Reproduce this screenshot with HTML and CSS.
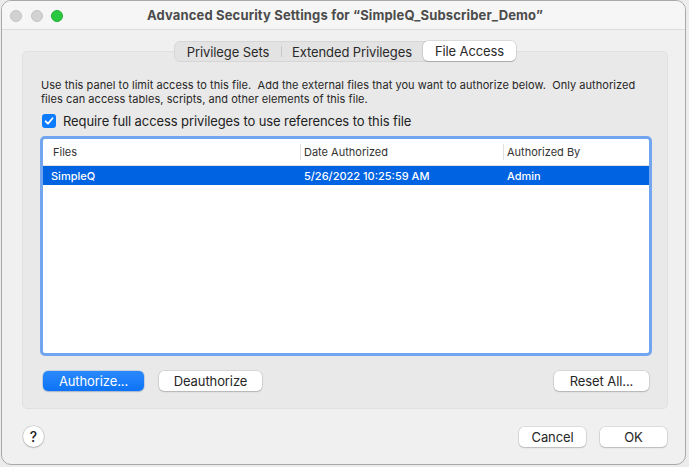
FILE: index.html
```html
<!DOCTYPE html>
<html>
<head>
<meta charset="utf-8">
<link rel="stylesheet" href="styles.css">
</head>
<body>
<div class="window">
  <div class="titlebar">
    <div class="lights">
      <span class="light off"></span>
      <span class="light off"></span>
      <span class="light green"></span>
    </div>
    <div class="title">Advanced Security Settings for “SimpleQ_Subscriber_Demo”</div>
    <div></div>
  </div>
  <div class="content">
    <div class="tabs">
      <span class="tab">Privilege Sets</span>
      <span class="tab sep">Extended Privileges</span>
      <span class="tab selected">File Access</span>
    </div>
    <div class="group">
      <p class="desc">Use this panel to limit access to this file.&nbsp; Add the external files that you want to authorize below.&nbsp; Only authorized<br>files can access tables, scripts, and other elements of this file.</p>
      <div class="check">
        <span class="box"><svg width="10" height="10" viewBox="0 0 10 10"><path d="M1.6 5.3 L4 7.7 L8.5 2.2" fill="none" stroke="#fff" stroke-width="1.8" stroke-linecap="round" stroke-linejoin="round"/></svg></span>
        <span class="check-label">Require full access privileges to use references to this file</span>
      </div>
      <div class="table">
        <div class="thead">
          <div class="th c1">Files</div>
          <div class="th c2">Date Authorized</div>
          <div class="th c3">Authorized By</div>
        </div>
        <div class="tr selected">
          <div class="td c1">SimpleQ</div>
          <div class="td c2">5/26/2022 10:25:59 AM</div>
          <div class="td c3">Admin</div>
        </div>
      </div>
      <div class="btnrow">
        <button class="btn primary w-auth">Authorize...</button>
        <button class="btn w-deauth">Deauthorize</button>
        <span class="spacer"></span>
        <button class="btn w-reset">Reset All...</button>
      </div>
    </div>
    <div class="footer">
      <button class="help">?</button>
      <span class="spacer"></span>
      <button class="btn w-cancel">Cancel</button>
      <button class="btn w-ok">OK</button>
    </div>
  </div>
</div>
</body>
</html>
```
FILE: styles.css
```css
* { box-sizing: border-box; }
html, body { margin: 0; padding: 0; }
body {
  background: #ececec;
  font-family: Inter, "Liberation Sans", sans-serif;
  color: #262626;
  width: 689px;
  height: 467px;
  overflow: hidden;
}
.window {
  margin-left: 1px;
  width: 685px;
  height: 465px;
  border: 1px solid #a9a9a9;
  border-radius: 10px;
  background: #f0f0f0;
  overflow: hidden;
  display: flex;
  flex-direction: column;
}
.titlebar {
  height: 29px;
  flex: none;
  background: #f6f6f6;
  border-bottom: 1px solid #dcdcdc;
  display: grid;
  grid-template-columns: 1fr auto 1fr;
  align-items: center;
}
.lights {
  display: flex;
  gap: 8.5px;
  padding-left: 8px;
  padding-top: 1px;
}
.light {
  width: 12px;
  height: 12px;
  border-radius: 50%;
}
.light.off { background: #d2d2d2; border: 0.5px solid #c3c3c3; }
.light.green { background: #2ac741; border: 0.5px solid #22ad37; }
.title {
  font-size: 13px;
  font-weight: 700;
  color: #4c4c4c;
  white-space: nowrap;
  letter-spacing: 0.15px;
  padding-left: 3px;
}
.content {
  flex: 1;
  padding: 11px 17px 0 20px;
  display: flex;
  flex-direction: column;
}
.tabs {
  align-self: center;
  display: flex;
  height: 21px;
  margin-bottom: -11px;
  position: relative;
  z-index: 1;
  background: #e3e3e3;
  border: 1px solid #d6d6d6;
  border-radius: 6px;
  font-size: 13px;
  letter-spacing: -0.1px;
}
.tab {
  display: flex;
  align-items: center;
  justify-content: center;
  padding: 0;
  height: 19px;
  color: #2a2a2a;
  position: relative;
  white-space: nowrap;
}
.tab.sep::before {
  content: "";
  position: absolute;
  left: 0;
  top: 4px;
  height: 11px;
  width: 1px;
  background: #c8c8c8;
}
.tab:first-child { width: 106px; }
.tab.sep { width: 142px; }
.tab.selected {
  width: 93px;
  background: #fff;
  border-radius: 5px;
  height: 20px;
  margin-top: -1px;
  margin-right: -1px;
  box-shadow: 0 0 0 0.5px rgba(0,0,0,0.18), 0 1px 1px rgba(0,0,0,0.12);
}
.group {
  height: 358px;
  flex: none;
  background: #e9e9e9;
  border: 1px solid #e0e0e0;
  border-radius: 5px;
  padding: 26px 15px 0 17px;
  display: flex;
  flex-direction: column;
}
.desc {
  margin: 0;
  padding-left: 1px;
  font-size: 11px;
  line-height: 14px;
  letter-spacing: 0.05px;
  color: #262626;
  white-space: nowrap;
}
.check {
  margin-top: 6px;
  height: 18px;
  margin-left: 2px;
  display: flex;
  align-items: center;
  gap: 7px;
}
.box {
  width: 14px;
  height: 14px;
  border-radius: 3px;
  background: #0b7bff;
  display: flex;
  align-items: center;
  justify-content: center;
}
.check-label {
  font-size: 13px;
  color: #222;
  letter-spacing: -0.1px;
}
.table {
  margin-top: 6px;
  height: 220px;
  flex: none;
  border: 3px solid #72a5ef;
  border-radius: 5px;
  background: #fff;
}
.thead, .tr {
  display: grid;
  grid-template-columns: 257px 203px 1fr;
}
.thead {
  height: 27px;
  border-bottom: 1px solid #e2e2e2;
  align-items: center;
  font-size: 11px;
  color: #333;
}
.th.c1 { padding-left: 10px; }
.th.c2, .th.c3 {
  padding-left: 3px;
  border-left: 1px solid #e0e0e0;
  line-height: 16px;
}
.tr {
  height: 19px;
  align-items: center;
  font-size: 11px;
  font-weight: 500;
}
.tr.selected { background: #0063e1; color: #fff; }
.td.c1 { padding-left: 8px; }
.td.c2, .td.c3 { padding-left: 4px; }
.btnrow {
  margin-top: 15px;
  display: flex;
  align-items: center;
  padding: 0 3px;
  gap: 15px;
}
.spacer { flex: 1; }
.btn {
  height: 20px;
  border: none;
  border-radius: 5px;
  background: #fff;
  box-shadow: 0 0 0 0.5px rgba(0,0,0,0.16), 0 1px 1.5px rgba(0,0,0,0.16);
  font-family: inherit;
  font-size: 13px;
  letter-spacing: -0.1px;
  color: #262626;
  padding: 0;
}
.btn.primary {
  background: linear-gradient(#2b89fc, #0c73f6);
  color: #fff;
  box-shadow: 0 0 0 0.5px rgba(0,80,200,0.3), 0 1px 1.5px rgba(0,0,0,0.14);
}
.w-auth { width: 101px; }
.w-deauth { width: 103px; }
.w-reset { width: 95px; }
.w-cancel { width: 67px; }
.w-ok { width: 67px; }
.footer {
  margin-top: 17px;
  display: flex;
  align-items: center;
  gap: 14px;
  padding-left: 1px;
  padding-right: 1px;
}
.help {
  width: 21px;
  height: 21px;
  border-radius: 50%;
  border: none;
  background: #fff;
  box-shadow: 0 0 0 0.5px rgba(0,0,0,0.18), 0 1px 1.5px rgba(0,0,0,0.18);
  font-family: inherit;
  font-size: 14px;
  font-weight: 500;
  color: #222;
  padding: 0;
}
```
